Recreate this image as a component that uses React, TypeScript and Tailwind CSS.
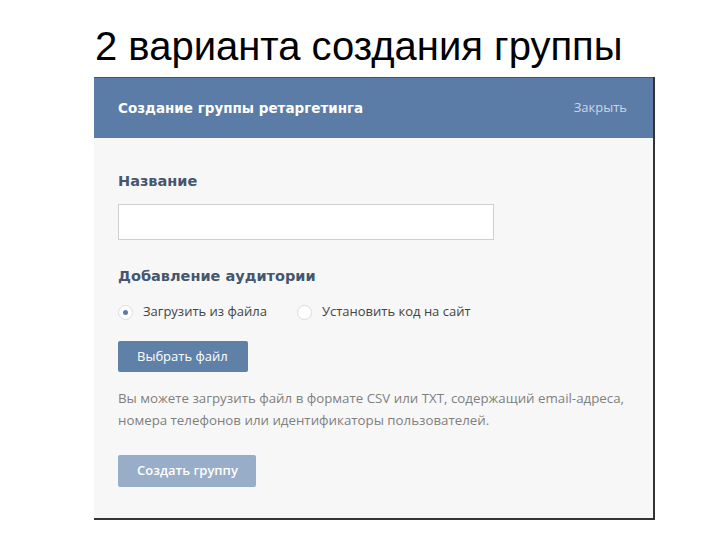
export default function App() {
  return (
    <div className="w-[720px] h-[540px] bg-white overflow-hidden">
      {/* Slide title */}
      <h1 className="pl-[95px] pt-[26px] h-[77px] text-[40px] leading-[40px] text-black font-['Liberation_Sans',Arial,sans-serif]">
        2 варианта создания группы
      </h1>

      {/* Dialog */}
      <div className="ml-[94px] w-[561px] border-r-2 border-b-2 border-[#333]">
        <div className="h-[61px] bg-[#5b7ca6] border-t border-[#3f5674] flex items-center justify-between pl-[24px] pr-[26px]">
          <span className="text-[13.5px] font-bold text-white font-['DejaVu_Sans',sans-serif]">
            Создание группы ретаргетинга
          </span>
          <span className="text-[13px] text-[#c9d6e8] font-['Open_Sans',sans-serif]">Закрыть</span>
        </div>

        <div className="bg-[#f7f7f7] pl-[24px] pt-[33px] pb-[31px] flex flex-col">
          <div className="h-[20px] leading-[20px] text-[14.5px] font-bold text-[#45566e] font-['DejaVu_Sans',sans-serif]">
            Название
          </div>
          <input
            type="text"
            className="mt-[13px] w-[376px] h-[36px] bg-white border border-[#cfcfcf] outline-none"
          />

          <div className="mt-[26px] h-[20px] leading-[20px] text-[14.5px] font-bold text-[#45566e] font-['DejaVu_Sans',sans-serif]">
            Добавление аудитории
          </div>

          <div className="mt-[16px] h-[20px] flex items-center text-[13px] text-[#444] font-['Open_Sans',sans-serif]">
            <span className="w-[15px] h-[15px] rounded-full bg-white border border-[#d6dde6] flex items-center justify-center">
              <span className="w-[5px] h-[5px] rounded-full bg-[#5b7ca6]" />
            </span>
            <span className="ml-[10px]">Загрузить из файла</span>
            <span className="ml-[30px] w-[15px] h-[15px] rounded-full bg-white border border-[#d6dde6]" />
            <span className="ml-[10px]">Установить код на сайт</span>
          </div>

          <button className="mt-[19px] w-[130px] h-[31px] rounded-[2px] bg-[#5f81a8] text-white text-[13px] font-['Open_Sans',sans-serif] text-left pl-[19px]">
            Выбрать файл
          </button>

          <p className="mt-[15px] text-[13.3px] leading-[22px] text-[#7f7f7f] font-['Open_Sans',sans-serif]">
            Вы можете загрузить файл в формате CSV или TXT, содержащий email-адреса,
            <br />
            номера телефонов или идентификаторы пользователей.
          </p>

          <button className="mt-[24px] w-[138px] h-[32px] rounded-[2px] bg-[#98adc7] text-white text-[13px] font-semibold font-['Open_Sans',sans-serif] text-left pl-[19px]">
            Создать группу
          </button>
        </div>
      </div>
    </div>
  );
}
